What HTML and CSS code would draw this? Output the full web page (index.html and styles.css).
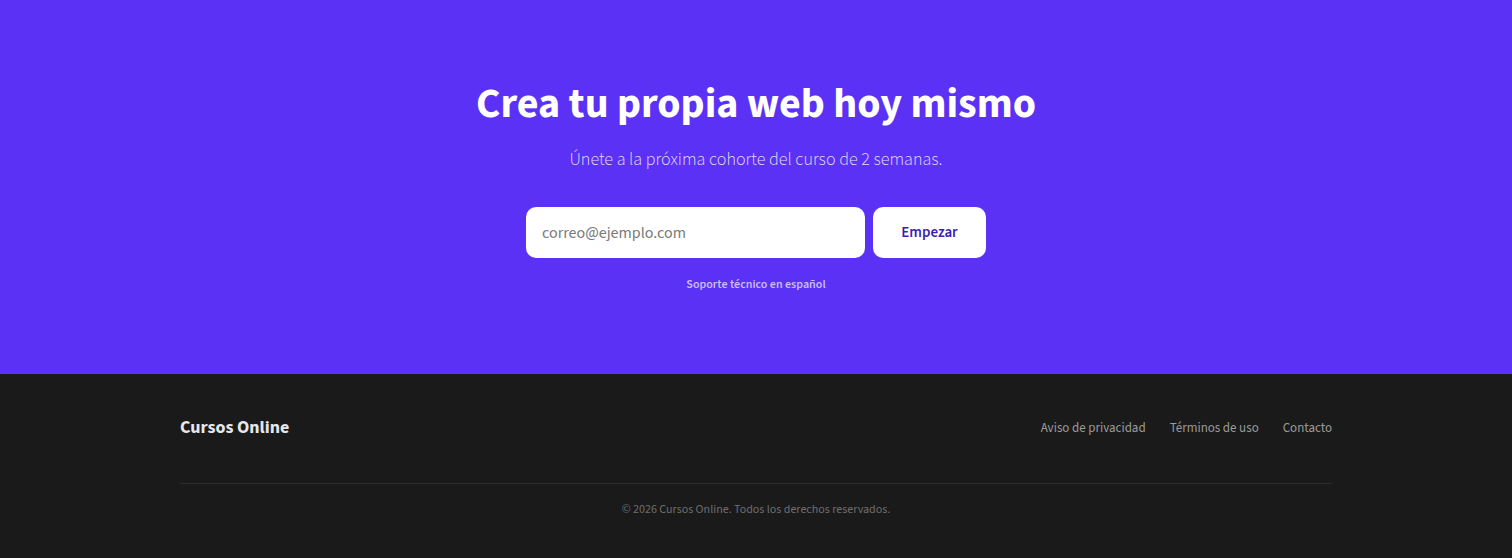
FILE: index.html
```html
<!DOCTYPE html>
<html lang="es">
<head>
<meta charset="utf-8">
<title>Cursos Online</title>
<link rel="stylesheet" href="styles.css">
</head>
<body>
<section class="hero">
  <h1 class="hero-title">Crea tu propia web hoy mismo</h1>
  <p class="hero-sub">Únete a la próxima cohorte del curso de 2 semanas.</p>
  <form class="signup">
    <input class="signup-input" type="email" placeholder="correo@ejemplo.com">
    <button class="signup-btn" type="button">Empezar</button>
  </form>
  <p class="hero-note">Soporte técnico en español</p>
</section>
<footer class="footer">
  <div class="footer-inner">
    <div class="footer-top">
      <span class="brand">Cursos Online</span>
      <nav class="footer-links">
        <a href="#">Aviso de privacidad</a>
        <a href="#">Términos de uso</a>
        <a href="#">Contacto</a>
      </nav>
    </div>
    <div class="footer-bottom">© 2026 Cursos Online. Todos los derechos reservados.</div>
  </div>
</footer>
</body>
</html>
```
FILE: styles.css
```css
* { box-sizing: border-box; }
html, body { margin: 0; padding: 0; }
body {
  font-family: "Source Sans Pro", "Source Sans 3", "Lato", "Liberation Sans", sans-serif;
  background: #1a1a1a;
}
.hero {
  background: #5b31f5;
  height: 374px;
  padding-top: 79px;
  display: flex;
  flex-direction: column;
  align-items: center;
  text-align: center;
}
.hero-title {
  margin: 0;
  font-size: 42px;
  line-height: 50px;
  font-weight: 700;
  color: #ffffff;
}
.hero-sub {
  margin: 17px 0 0;
  font-size: 18px;
  line-height: 28px;
  font-weight: 300;
  color: #e2dbff;
}
.signup {
  margin-top: 33px;
  display: flex;
  gap: 8px;
}
.signup-input {
  width: 339px;
  height: 51px;
  border: none;
  border-radius: 10px;
  padding: 0 16px;
  font-family: inherit;
  font-size: 16px;
  color: #333;
  background: #fff;
  outline: none;
}
.signup-input::placeholder { color: #7a7a7a; }
.signup-btn {
  width: 113px;
  height: 51px;
  border: none;
  border-radius: 10px;
  background: #fff;
  color: #3b1fb0;
  font-family: inherit;
  font-size: 15px;
  font-weight: 600;
}
.hero-note {
  margin: 19px 0 0;
  font-size: 12px;
  line-height: 16px;
  font-weight: 600;
  color: #c9bcfd;
}
.footer {
  padding: 40px 0 41px;
}
.footer-inner {
  width: 1152px;
  margin: 0 auto;
}
.footer-top {
  display: flex;
  justify-content: space-between;
  align-items: center;
  height: 26px;
}
.brand {
  font-size: 18px;
  font-weight: 700;
  color: #e5e7eb;
}
.footer-links {
  display: flex;
  gap: 24px;
  padding-top: 2px;
}
.footer-links a {
  font-size: 13px;
  color: #9a9a9a;
  text-decoration: none;
}
.footer-bottom {
  margin-top: 43px;
  border-top: 1px solid #2c2c2c;
  padding-top: 18px;
  font-size: 12px;
  line-height: 16px;
  color: #6e6e6e;
  text-align: center;
}
```
